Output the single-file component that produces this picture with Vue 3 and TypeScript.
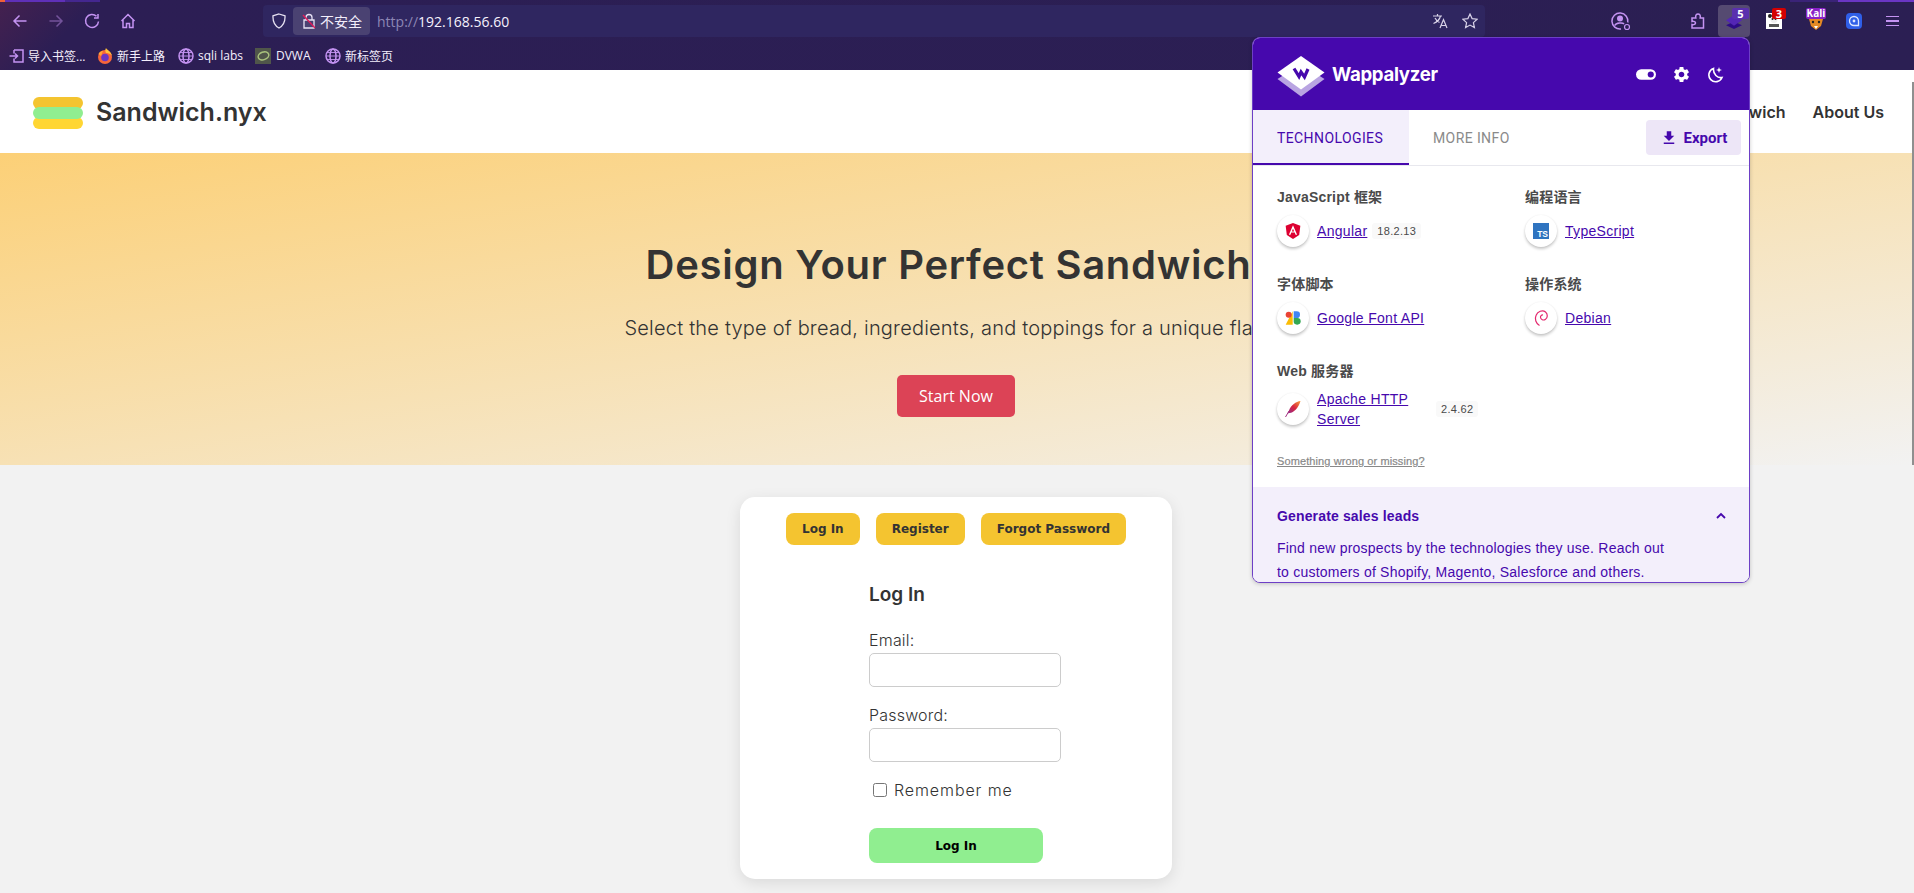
<script setup lang="ts">
interface Tech { name: string; icon: string; version?: string }
interface Group { title: string; items: Tech[] }

const groups: Group[] = [
  { title: 'JavaScript 框架', items: [{ name: 'Angular', icon: 'angular', version: '18.2.13' }] },
  { title: '编程语言', items: [{ name: 'TypeScript', icon: 'ts' }] },
  { title: '字体脚本', items: [{ name: 'Google Font API', icon: 'gfont' }] },
  { title: '操作系统', items: [{ name: 'Debian', icon: 'debian' }] },
  { title: 'Web 服务器', items: [{ name: 'Apache HTTP Server', icon: 'apache', version: '2.4.62' }] }
]
const bookmarks = [
  { label: '导入书签...', icon: 'import' },
  { label: '新手上路', icon: 'firefox' },
  { label: 'sqli labs', icon: 'globe' },
  { label: 'DVWA', icon: 'dvwa' },
  { label: '新标签页', icon: 'globe' }
]
</script>

<template>
  <div class="app">
    <header class="chrome">
      <div class="tabline"><i class="t1"></i><i class="t2"></i><i class="t3"></i><i class="t4"></i><i class="t5"></i></div>
      <div class="toolbar">
        <div class="navbtns">
          <span class="slot"><svg width="16" height="16" viewBox="0 0 16 16" class="ic"><path d="M14.500 8H2M7.500 2.500 2 8l5.500 5.500" /></svg></span>
          <span class="slot dim"><svg width="16" height="16" viewBox="0 0 16 16" class="ic"><path d="M1.500 8H14M8.500 2.500 14 8l-5.500 5.500" /></svg></span>
          <span class="slot"><svg width="16" height="16" viewBox="0 0 16 16" class="ic"><path d="M14.500 8.500A6.500 6.500 0 1 1 12.500 3.200M14 1v4h-4" /></svg></span>
          <span class="slot"><svg width="16" height="16" viewBox="0 0 16 16" class="ic"><path d="M1.500 8 8 1.500 14.500 8M3 7v7.500h3.500V10.500h3v4H13V7" /></svg></span>
        </div>
        <div class="urlbar">
          <svg class="shield" width="14" height="16" viewBox="0 0 14 16"><path d="M7 1 13 2.800c.3 5.500-1.500 9.700-6 12.200C2.500 12.500.7 8.300 1 2.800z" /></svg>
          <span class="lockpill">
            <svg width="14" height="16" viewBox="0 0 14 16" class="lock">
              <path d="M4 7V4.500a3 3 0 0 1 6 0V7M2 7h10v8H2z" fill="none" stroke="#e8e3f5" stroke-width="1.300" />
              <path d="M1 2 13 15" stroke="#e01b5a" stroke-width="1.400" />
            </svg>
            <span>不安全</span>
          </span>
          <span class="url"><span class="scheme">http://</span>192.168.56.60</span>
          <span class="urlend">
            <svg width="16" height="16" viewBox="0 0 16 16" class="urlic"><path d="M1 3h9M5.500 1v2M8.500 3C7.800 6 5 9 1.500 10.500M3 5c1 2 2.500 3.500 4.500 4.500M8 15l3.500-8.500L15 15M9.200 12.500h4.600" /></svg>
            <svg width="16" height="16" viewBox="0 0 16 16" class="urlic star"><path d="m8 1 2.100 4.600 5 .6-3.700 3.400 1 5L8 12.100l-4.400 2.500 1-5L.9 6.200l5-.6z" /></svg>
          </span>
        </div>
        <div class="exts">
          <span class="ext e-profile">
            <svg width="20" height="20" viewBox="0 0 20 20" class="ic"><path d="M16.800 11.500A8 8 0 1 0 10 18" /><circle cx="9" cy="7.500" r="3" fill="#c493f2" stroke="none" /><path d="M3.800 14.500C5 11.500 12 11.500 13 13" /><circle cx="16" cy="16" r="2.500" stroke-width="1.200" /></svg>
          </span>
          <span class="ext e-puzzle">
            <svg width="16" height="16" viewBox="0 0 16 16" class="ic" stroke-width="1.300"><path d="M6 15H14.500V5H11.200C11.800 2 10.500 1 9 1S6.200 2 6.800 5H3V8.500C5 8 6.500 9 6.500 10S5 12 3 11.500V15z" /></svg>
          </span>
          <span class="ext e-wap active">
            <svg width="16" height="14" viewBox="0 0 17 15"><path d="M8.500 7 17 11l-8.500 4L0 11z" fill="#2d0b86" /><path d="M8.500 0 17 5.500l-8.500 6L0 5.500z" fill="#5326b5" /></svg>
            <b class="bdg b5">5</b>
          </span>
          <span class="ext e-panda">
            <svg width="16" height="16" viewBox="0 0 16 16"><rect width="16" height="16" fill="#fff" /><circle cx="4" cy="3" r="2" fill="#222" /><circle cx="12" cy="3" r="2" fill="#222" /><circle cx="8" cy="6.500" r="3.500" fill="#eee" /><circle cx="6.500" cy="6" r="1" fill="#222" /><circle cx="9.500" cy="6" r="1" fill="#222" /><rect x="3" y="11" width="10" height="3" fill="#555" /></svg>
            <b class="bdg b3">3</b>
          </span>
          <span class="ext e-kali">
            <svg width="16" height="12" viewBox="0 0 16 12"><path d="M1 1h14l-2 7-5 4-5-4z" fill="#e58a24" /><circle cx="5" cy="4" r="1.200" fill="#222" /><circle cx="11" cy="4" r="1.200" fill="#222" /><path d="M6 8h4l-2 3z" fill="#fff" /></svg>
            <b class="bdg bk">Kali</b>
          </span>
          <span class="ext e-blue">
            <svg width="16" height="16" viewBox="0 0 16 16"><rect width="16" height="16" rx="4" fill="#2f5fe8" /><path d="M8 3.500a4.500 4.500 0 1 0 0 9h4.500V8A4.500 4.500 0 0 0 8 3.500z" fill="none" stroke="#dce6ff" stroke-width="1.300" /><circle cx="8" cy="8" r="1.400" fill="#dce6ff" /></svg>
          </span>
          <span class="ext e-menu"><i></i><i></i><i></i></span>
        </div>
      </div>
      <div class="bookmarks">
        <span v-for="b in bookmarks" :key="b.label" class="bm" :class="'bm-' + b.icon">
          <svg v-if="b.icon === 'import'" width="15" height="14" viewBox="0 0 15 14" class="ic" stroke-width="1.200"><path d="M5 1h9v12H5V9.500M5 4.500V1M.5 7h8M6 4.500 8.500 7 6 9.500" /></svg>
          <svg v-else-if="b.icon === 'firefox'" width="16" height="16" viewBox="0 0 16 16"><circle cx="8" cy="9" r="7" fill="#f7653a" /><path d="M9 0c1 2 5 3 6 8-2-3-5-3-6-3-1-2-1-3 0-5z" fill="#ffc13d" /><circle cx="8" cy="9.500" r="3.800" fill="#6b37c4" /><path d="M1.500 6C3 3 5 3 6 3L4 8z" fill="#ffa436" /></svg>
          <svg v-else-if="b.icon === 'globe'" width="16" height="16" viewBox="0 0 16 16" class="ic" stroke-width="1.200"><circle cx="8" cy="8" r="7" /><ellipse cx="8" cy="8" rx="3" ry="7" /><path d="M1 8h14M2 4.500h12M2 11.500h12" stroke-width=".9" /></svg>
          <svg v-else width="16" height="16" viewBox="0 0 16 16"><rect width="16" height="16" fill="#50564a" /><ellipse cx="8.500" cy="8" rx="5.500" ry="3.800" fill="none" stroke="#a9c27d" stroke-width="1.500" transform="rotate(-20 8 8)" /></svg>
          <span>{{ b.label }}</span>
        </span>
      </div>
    </header>

    <nav class="sitenav">
      <div class="brand">
        <span class="burger"><i class="bun1"></i><i class="fill"></i><i class="bun2"></i></span>
        <span class="brandname">Sandwich.nyx</span>
      </div>
      <div class="links">
        <a>Design Sandwich</a>
        <a>About Us</a>
      </div>
    </nav>

    <section class="hero">
      <h1>Design Your Perfect Sandwich</h1>
      <p>Select the type of bread, ingredients, and toppings for a unique flavor.</p>
      <button class="start">Start Now</button>
    </section>

    <main class="content">
      <div class="card">
        <div class="tabs">
          <button>Log In</button>
          <button>Register</button>
          <button>Forgot Password</button>
        </div>
        <form class="form" @submit.prevent>
          <h2>Log In</h2>
          <label class="lbl">Email:</label>
          <input class="inp" type="email" />
          <label class="lbl second">Password:</label>
          <input class="inp" type="password" />
          <label class="remember"><input type="checkbox" /><span>Remember me</span></label>
          <button class="submit">Log In</button>
        </form>
      </div>
    </main>

    <aside class="popup">
      <div class="p-head">
        <svg class="p-logo" width="48" height="41" viewBox="0 0 48 41">
          <path d="M24 8 47.500 23 24 40.500.5 23z" fill="#b9a4e2" />
          <path d="M24 0 47.500 16.500 24 33.500.5 16.500z" fill="#fff" />
          <path d="M17 12.500l5 8 2-4.500 3.500 5 3.500-8" fill="none" stroke="#4608ad" stroke-width="3.200" />
        </svg>
        <span class="p-name">Wappalyzer</span>
        <span class="p-actions">
          <svg width="20" height="11" viewBox="0 0 21 11"><rect width="21" height="11" rx="5.500" fill="#fff" /><circle cx="15.500" cy="5.500" r="3.200" fill="#4608ad" /></svg>
          <svg width="19" height="19" viewBox="0 0 24 24" fill="#fff"><path d="M19.140 12.940c.04-.3.060-.61.060-.94 0-.32-.02-.64-.07-.94l2.030-1.580c.18-.14.23-.41.12-.61l-1.920-3.320c-.12-.22-.37-.29-.59-.22l-2.390.96c-.5-.38-1.030-.7-1.620-.94l-.36-2.540c-.04-.24-.24-.41-.48-.41h-3.840c-.24 0-.43.17-.47.41l-.36 2.540c-.59.24-1.130.57-1.620.94l-2.390-.96c-.22-.08-.47 0-.59.22L2.740 8.870c-.12.21-.08.47.12.61l2.030 1.580c-.05.3-.09.63-.09.94s.02.64.07.94l-2.030 1.580c-.18.14-.23.41-.12.61l1.920 3.320c.12.22.37.29.59.22l2.390-.96c.5.38 1.030.7 1.620.94l.36 2.540c.05.24.24.41.48.41h3.840c.24 0 .44-.17.47-.41l.36-2.540c.59-.24 1.130-.56 1.620-.94l2.390.96c.22.08.47 0 .59-.22l1.920-3.320c.12-.22.07-.47-.12-.61l-2.010-1.580zM12 15.600c-1.980 0-3.600-1.620-3.600-3.600s1.620-3.600 3.600-3.600 3.600 1.620 3.600 3.600-1.620 3.600-3.600 3.600z" /></svg>
          <svg width="17" height="17" viewBox="0 0 17 17" fill="none" stroke="#fff" stroke-width="1.600"><path d="M6.500 2.500A6.800 6.800 0 1 0 15 11.500c-4.500 1-9-3.500-8.500-9z" /><path d="M12 1l.8 2.200L15 4l-2.200.8L12 7l-.8-2.200L9 4l2.200-.8z" fill="#fff" stroke="none" /></svg>
        </span>
      </div>
      <div class="p-tabs">
        <span class="p-tab on">TECHNOLOGIES</span>
        <span class="p-tab">MORE INFO</span>
        <button class="export">
          <svg width="18" height="18" viewBox="0 0 24 24" fill="#4608ad"><path d="M19 9h-4V3H9v6H5l7 7 7-7zM5 18v2h14v-2H5z" /></svg>
          Export
        </button>
      </div>
      <div class="p-body">
        <div class="p-grid">
          <section v-for="g in groups" :key="g.title" class="p-group">
            <h3>{{ g.title }}</h3>
            <div v-for="t in g.items" :key="t.name" class="tech">
              <span class="ticon">
                <svg v-if="t.icon === 'angular'" width="16" height="18" viewBox="0 0 24 26"><path d="M12 1 23 5l-1.700 14L12 25 2.700 19 1 5z" fill="#dd0031" /><path d="M12 4.500 5.800 18.500h2.400l1.200-3.100h5.200l1.200 3.100h2.400zm0 5.100 1.800 4h-3.600z" fill="#fff" /></svg>
                <svg v-else-if="t.icon === 'ts'" width="16" height="16" viewBox="0 0 16 16"><rect width="16" height="16" fill="#2f74c0" /><text x="15" y="14" text-anchor="end" class="ts-text">TS</text></svg>
                <svg v-else-if="t.icon === 'gfont'" width="16" height="16" viewBox="0 0 24 24"><path d="M11.500 2v20H1z" fill="#fbbc04" /><circle cx="5.500" cy="7" r="4.500" fill="#ea4335" /><path d="M13 2h4.500a5 5 0 0 1 0 10H13z" fill="#4285f4" /><path d="M13 12h5.500a5 5 0 0 1 0 10H18a5 5 0 0 1-5-5z" fill="#34a853" /></svg>
                <svg v-else-if="t.icon === 'debian'" width="16" height="18" viewBox="0 0 16 18" fill="none" stroke="#e3286e" stroke-width="1.200"><path d="M6.500 16.500C2.800 14.500 1.500 10 3 6.500 4.500 2.500 9.500.5 12.500 3c2.500 2 2.300 6-.2 7.500-2 1.200-4.500 0-4.800-2-.2-1.500 1-2.800 2.500-2.500" /></svg>
                <svg v-else width="18" height="18" viewBox="0 0 18 18"><defs><linearGradient id="feather" x1="1" y1="0" x2="0" y2="1"><stop offset="0" stop-color="#f9a03c" /><stop offset=".5" stop-color="#d8263e" /><stop offset="1" stop-color="#8e2a8f" /></linearGradient></defs><path d="M16.500 1C12 1.500 7 5 5 10.500L3.500 13.500 5.500 13C10 12.500 14.500 8 16.500 1z" fill="url(#feather)" /><path d="M1.500 17 5 11" stroke="#a33282" stroke-width="1" /></svg>
              </span>
              <a class="tlink">{{ t.name }}</a>
              <span v-if="t.version" class="ver">{{ t.version }}</span>
            </div>
          </section>
        </div>
        <a class="wrong">Something wrong or missing?</a>
      </div>
      <div class="p-foot">
        <div class="foot-head">
          <strong>Generate sales leads</strong>
          <svg width="12" height="8" viewBox="0 0 12 8" fill="none" stroke="#4608ad" stroke-width="1.800"><path d="M2 6l4-4 4 4" /></svg>
        </div>
        <p>Find new prospects by the technologies they use. Reach out<br />to customers of Shopify, Magento, Salesforce and others.</p>
      </div>
    </aside>

    <div class="scrollthumb"></div>
  </div>
</template>

<style>
html, body { margin: 0; background: #f2f2f2; overflow: hidden; }
</style>

<style scoped>
.app { position: relative; width: 1914px; height: 893px; overflow: hidden; background: #f2f2f2; font-family: Inter, "Noto Sans CJK SC", sans-serif; color: #333; }

.chrome { height: 70px; position: relative; background: linear-gradient(135deg, #45214f 0, #2c1e54 5%, #2b1f53 100%); color: #f4effc; font-family: "Open Sans", "Noto Sans CJK SC", sans-serif; overflow: hidden; }
.tabline { display: flex; height: 2px; position: absolute; left: 0; right: 0; top: 0; }
.tabline i { display: block; height: 2px; }
.t1 { width: 5px; background: #f0603a; }
.t2 { width: 60px; background: #5f30b8; }
.t3 { width: 35px; background: #44278f; }
.t4 { margin-left: auto; width: 48px; background: #3a2377; }
.t5 { width: 76px; background: #6a36c4; }
.toolbar { display: flex; align-items: flex-start; height: 41px; padding-top: 5px; box-sizing: border-box; }
.navbtns { display: flex; margin-left: 2px; height: 32px; }
.slot { width: 36px; display: flex; align-items: center; justify-content: center; }
.slot.dim { opacity: .45; }
.ic { fill: none; stroke: #c493f2; stroke-width: 1.500; }
.urlbar { display: flex; align-items: center; width: 1222px; height: 32px; margin-left: 117px; background: #2f2660; border-radius: 4px; box-sizing: border-box; padding-left: 9px; }
.shield { fill: none; stroke: #e4dff0; stroke-width: 1.300; }
.lockpill { display: flex; align-items: center; gap: 4px; margin-left: 7px; width: 77px; height: 28px; box-sizing: border-box; padding-left: 9px; background: #4a4272; border-radius: 4px; font-size: 14px; color: #f3eefb; }
.url { margin-left: 7px; font-size: 14px; color: #f6f2fd; }
.scheme { color: #8d86b5; }
.urlend { margin-left: auto; display: flex; gap: 14px; padding-right: 7px; }
.urlic { fill: none; stroke: #d8d2e8; stroke-width: 1.200; }
.exts { display: flex; margin-left: 120px; height: 32px; }
.ext { position: relative; width: 32px; height: 32px; display: flex; align-items: center; justify-content: center; border-radius: 4px; }
.e-puzzle { margin-left: 44px; }
.e-wap { margin-left: 5px; }
.e-wap svg { margin-top: 2px; }
.active { background: #554a71; }
.e-panda { margin-left: 8px; }
.e-kali { margin-left: 10px; }
.e-kali svg { margin-top: 5px; }
.e-blue { margin-left: 6px; }
.e-menu { margin-left: 6px; flex-direction: column; gap: 3px; }
.e-menu i { display: block; width: 13px; height: 1.500px; background: #c493f2; }
.bdg { position: absolute; top: 3px; height: 11px; line-height: 11px; font-size: 11px; font-weight: 700; text-align: center; color: #fff; font-family: "Open Sans", sans-serif; border-radius: 2px; }
.b5 { left: 14px; width: 17px; background: #5a30ae; }
.b3 { left: 14px; width: 14px; background: #d40000; }
.bk { left: 6px; width: 20px; background: #8a21c7; font-size: 10px; }
.bookmarks { display: flex; align-items: center; height: 29px; font-size: 12px; color: #f4effc; }
.bm { display: flex; align-items: center; gap: 4px; white-space: nowrap; }
.bm-import { margin-left: 9px; width: 88px; }
.bm-firefox { width: 81px; }
.bm-globe { width: 77px; }
.bm-dvwa { width: 70px; gap: 5px; }

.sitenav { height: 83px; background: #fff; display: flex; align-items: center; justify-content: space-between; padding: 0 30px 0 33px; box-sizing: border-box; }
.brand { display: flex; align-items: center; gap: 13px; }
.burger { display: flex; flex-direction: column; width: 50px; height: 30px; }
.burger i { display: block; height: 12px; border-radius: 6px; margin-bottom: -2px; }
.bun1 { background: #f4c430; }
.fill { background: #90ee90; z-index: 1; }
.bun2 { background: #ffd633; }
.brandname { font-size: 25px; font-weight: 600; color: #333; }
.links { display: flex; gap: 27px; font-size: 16px; font-weight: 600; }

.hero { height: 312px; box-sizing: border-box; padding: 88px 2px 0 0; text-align: center; background: linear-gradient(to bottom right, #fcd077, #f2f2f2); }
.hero h1 { margin: 0; padding-right: 15px; font-size: 40px; line-height: 48px; font-weight: 600; letter-spacing: .72px; color: #333; white-space: nowrap; }
.hero p { margin: 24px 0 0; font-size: 20px; line-height: 30px; font-weight: 300; letter-spacing: .2px; color: #333; white-space: nowrap; }
.start { margin-top: 32px; width: 118px; height: 42px; border: 0; border-radius: 5px; background: #dc4356; color: #fff; font: 16px "Open Sans", sans-serif; }

.content { display: flex; justify-content: center; padding: 32px 2px 0 0; }
.card { width: 432px; height: 382px; box-sizing: border-box; padding-top: 16px; background: #fff; border-radius: 15px; box-shadow: 0 4px 15px rgba(0, 0, 0, .1); }
.tabs { display: flex; justify-content: center; gap: 16px; }
.tabs button { height: 32px; padding: 0 16px; border: 0; border-radius: 8px; background: #f4c430; color: #333; font: 700 12px "DejaVu Sans", sans-serif; }
.form { display: flex; flex-direction: column; align-items: flex-start; margin-left: 129px; }
.form h2 { margin: 36px 0 19px; font-size: 19px; line-height: 28px; font-weight: 600; }
.lbl { font-size: 16px; line-height: 24px; font-weight: 300; letter-spacing: .2px; }
.lbl.second { margin-top: 16px; }
.inp { width: 192px; height: 34px; margin-top: 1px; box-sizing: border-box; border: 1px solid #ccc; border-radius: 5px; background: #fff; }
.remember { display: flex; align-items: center; margin-top: 16px; height: 24px; font-size: 16px; font-weight: 300; letter-spacing: .9px; }
.remember input { width: 14px; height: 14px; margin: 0 7px 0 4px; }
.submit { margin-top: 26px; width: 174px; height: 35px; border: 0; border-radius: 8px; background: #90ee90; color: #000; font: 700 12px "DejaVu Sans", sans-serif; }

.popup { position: absolute; left: 1252px; top: 37px; width: 498px; height: 546px; box-sizing: border-box; border: 1px solid #6d3fc6; border-radius: 8px; background: #fff; overflow: hidden; display: flex; flex-direction: column; box-shadow: 0 1px 4px rgba(0, 0, 0, .2); font-family: "Liberation Sans", "Noto Sans CJK SC", sans-serif; }
.p-head { height: 72px; flex: none; background: #4608ad; display: flex; align-items: center; color: #fff; padding-left: 24px; }
.p-logo { margin-top: 4px; flex: none; }
.p-name { margin-left: 7px; font: 700 18.600px Inter, sans-serif; letter-spacing: -.3px; }
.p-actions { margin-left: auto; display: flex; align-items: center; gap: 16px; padding-right: 25px; }
.p-tabs { height: 56px; flex: none; display: flex; position: relative; border-bottom: 1px solid #e8e8ee; box-sizing: border-box; }
.p-tab { display: flex; align-items: center; padding: 0 24px; font: 14px Roboto, sans-serif; color: #8a8a8a; letter-spacing: .4px; }
.p-tab.on { width: 156px; box-sizing: border-box; background: #f3effb; color: #4608ad; border-bottom: 2px solid #4608ad; padding: 2px 0 0 24px; white-space: nowrap; }
.export { position: absolute; right: 8px; top: 10px; width: 95px; height: 35px; display: flex; align-items: center; justify-content: center; gap: 6px; border: 0; border-radius: 4px; background: #ede6f7; color: #4608ad; font: 700 15px Roboto, sans-serif; }
.p-body { flex: none; height: 321px; box-sizing: border-box; padding: 23px 24px 0; }
.p-grid { display: grid; grid-template-columns: 248px 1fr; row-gap: 29px; }
.p-group h3 { margin: 0 0 10px; font-size: 14px; line-height: 16px; font-weight: 700; color: #4a4a4a; letter-spacing: .2px; }
.tech { display: flex; align-items: center; }
.ticon { width: 32px; height: 32px; border-radius: 50%; flex: none; margin-right: 8px; background: #fff; box-shadow: 0 2px 3px rgba(0, 0, 0, .22), 0 0 2px rgba(0, 0, 0, .06); display: flex; align-items: center; justify-content: center; }
.ts-text { font: 700 8.500px "Liberation Sans", sans-serif; fill: #fff; }
.tlink { max-width: 114px; font-size: 14px; line-height: 20px; letter-spacing: .3px; color: #4608ad; text-decoration: underline; }
.ver { margin-left: 5px; padding: 0 5px; height: 16px; line-height: 16px; font-size: 11px; letter-spacing: .3px; color: #4a4a4a; background: #f9f9f9; border-radius: 3px; }
.wrong { display: block; margin-top: 25px; font-size: 11px; line-height: 14px; font-weight: 400; letter-spacing: .1px; color: #888; text-decoration: underline; -webkit-text-stroke: .2px #888; }
.p-foot { flex: 1; background: #f3effb; padding: 0 24px; color: #4608ad; }
.foot-head { display: flex; justify-content: space-between; align-items: center; height: 20px; margin-top: 19px; }
.foot-head strong { font-size: 14px; letter-spacing: .15px; }
.foot-head svg { margin-right: -2px; }
.p-foot p { margin: 10px 0 0; font-size: 14px; line-height: 24px; letter-spacing: .22px; }
.scrollthumb { position: absolute; left: 1912px; top: 82px; width: 2px; height: 383px; background: #8f8f8f; }
</style>
